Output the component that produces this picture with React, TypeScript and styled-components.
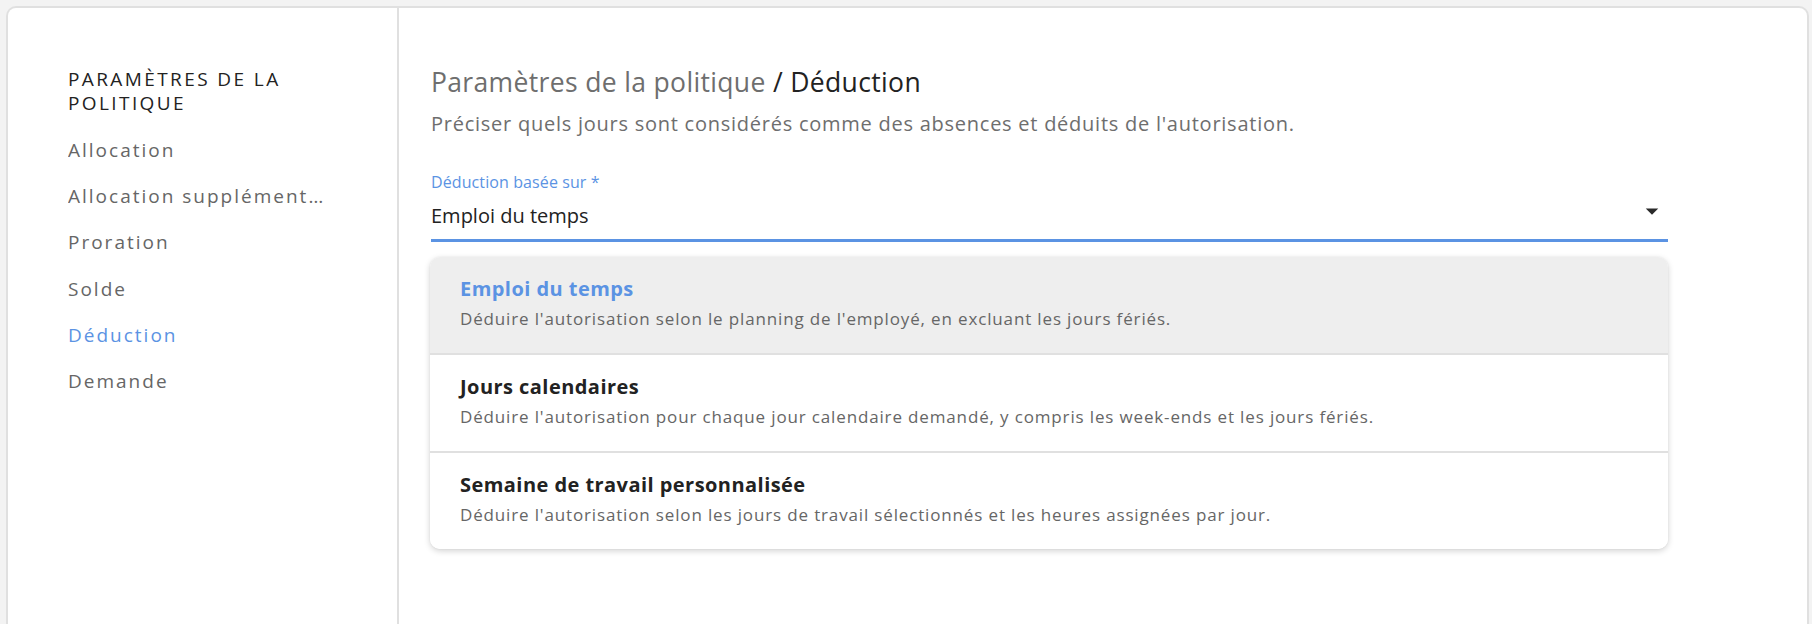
import styled, { createGlobalStyle } from "styled-components";

const GlobalStyle = createGlobalStyle`
  html, body {
    margin: 0;
    padding: 0;
    background: #f3f3f3;
    font-family: "Open Sans", "Noto Sans", sans-serif;
  }
`;

const BLUE = "#5b93e3";

//************************************************************

const Page = styled.div`
  padding: 6px 3px 0 6px;
  height: 624px;
  box-sizing: border-box;
  overflow: hidden;
`;

const Card = styled.div`
  display: grid;
  grid-template-columns: 391px 1fr;
  height: 700px;
  background: #fff;
  border: 2px solid #e0e0e0;
  border-bottom: none;
  border-radius: 10px 10px 0 0;
`;

const Sidebar = styled.nav`
  border-right: 2px solid #e0e0e0;
  padding: 59px 68px 0 60px;
  display: flex;
  flex-direction: column;
  min-width: 0;
`;

const SidebarTitle = styled.div`
  font-size: 19px;
  line-height: 24px;
  color: #222;
  text-transform: uppercase;
  letter-spacing: 2.4px;
  margin-bottom: 12px;
`;

const SidebarItem = styled.div<{ active?: boolean }>`
  font-size: 19px;
  line-height: 46.2px;
  letter-spacing: 2px;
  color: ${(p) => (p.active ? BLUE : "#666")};
  white-space: nowrap;
  overflow: hidden;
  text-overflow: ellipsis;
`;

const Main = styled.section`
  padding: 57px 139px 0 32px;
`;

const Heading = styled.h1`
  margin: 0;
  font-size: 26.5px;
  line-height: 34px;
  font-weight: 400;
  color: #6e6e6e;
  letter-spacing: 0.35px;

  span {
    color: #222;
  }
`;

const Subtitle = styled.p`
  margin: 11px 0 0;
  font-size: 20px;
  line-height: 28px;
  color: #6e6e6e;
  letter-spacing: 0.75px;
`;

const Field = styled.div`
  margin-top: 34px;
  position: relative;
  border-bottom: 3px solid ${BLUE};
  padding-bottom: 9px;
`;

const FieldLabel = styled.label`
  display: block;
  font-size: 16px;
  line-height: 20px;
  color: ${BLUE};
  letter-spacing: 0.1px;
`;

const FieldValue = styled.div`
  margin-top: 10px;
  font-size: 20px;
  line-height: 28px;
  color: #222;
`;

const Caret = styled.svg`
  position: absolute;
  right: 1px;
  top: 24px;
  width: 30px;
  height: 30px;
  fill: #2a2a2a;
`;

const Menu = styled.ul`
  list-style: none;
  margin: 15px 0 0 -1px;
  padding: 0;
  background: #fff;
  border-radius: 10px;
  box-shadow: 0 2px 6px rgba(0, 0, 0, 0.18), 0 0 2px rgba(0, 0, 0, 0.06);
  overflow: hidden;
`;

const MenuItem = styled.li<{ selected?: boolean }>`
  padding: 17px 30px 19px;
  background: ${(p) => (p.selected ? "#eeeeee" : "#fff")};
  & + & {
    border-top: 2px solid #e0e0e0;
  }
`;

const ItemTitle = styled.div<{ selected?: boolean }>`
  font-size: 20px;
  line-height: 30px;
  font-weight: 700;
  letter-spacing: 0.45px;
  color: ${(p) => (p.selected ? BLUE : "#222")};
`;

const ItemDesc = styled.div`
  font-size: 17px;
  line-height: 30px;
  letter-spacing: 0.85px;
  color: #666;
`;

const navItems = [
  "Allocation",
  "Allocation supplémentaire",
  "Proration",
  "Solde",
  "Déduction",
  "Demande",
];

const options = [
  {
    title: "Emploi du temps",
    desc: "Déduire l'autorisation selon le planning de l'employé, en excluant les jours fériés.",
  },
  {
    title: "Jours calendaires",
    desc: "Déduire l'autorisation pour chaque jour calendaire demandé, y compris les week-ends et les jours fériés.",
  },
  {
    title: "Semaine de travail personnalisée",
    desc: "Déduire l'autorisation selon les jours de travail sélectionnés et les heures assignées par jour.",
  },
];

export default function App() {
  const selected = 0;
  return (
    <>
      <GlobalStyle />
      <Page>
        <Card>
          <Sidebar>
            <SidebarTitle>Paramètres de la politique</SidebarTitle>
            {navItems.map((item) => (
              <SidebarItem key={item} active={item === "Déduction"}>
                {item}
              </SidebarItem>
            ))}
          </Sidebar>
          <Main>
            <Heading>
              Paramètres de la politique <span>/ Déduction</span>
            </Heading>
            <Subtitle>
              Préciser quels jours sont considérés comme des absences et déduits de l'autorisation.
            </Subtitle>
            <Field>
              <FieldLabel>Déduction basée sur *</FieldLabel>
              <FieldValue>{options[selected].title}</FieldValue>
              <Caret viewBox="0 0 24 24">
                <path d="M7 10l5 5 5-5z" />
              </Caret>
            </Field>
            <Menu>
              {options.map((o, i) => (
                <MenuItem key={o.title} selected={i === selected}>
                  <ItemTitle selected={i === selected}>{o.title}</ItemTitle>
                  <ItemDesc>{o.desc}</ItemDesc>
                </MenuItem>
              ))}
            </Menu>
          </Main>
        </Card>
      </Page>
    </>
  );
}
